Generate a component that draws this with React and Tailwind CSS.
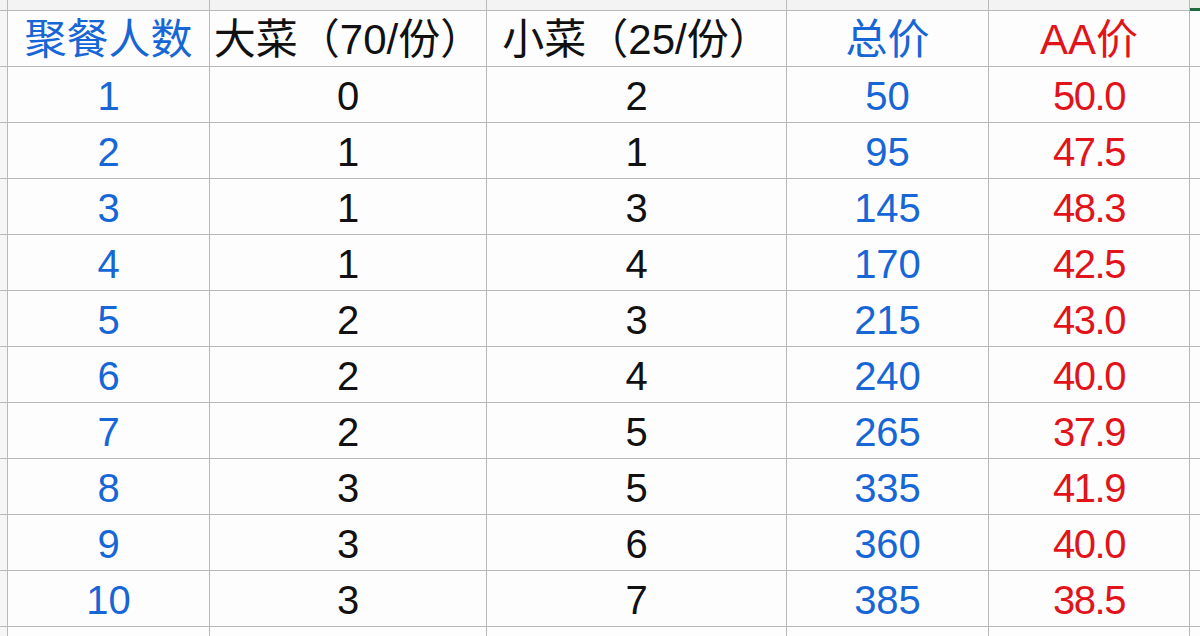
import React from "react";

const rows = [
  [1, 0, 2, 50, "50.0"],
  [2, 1, 1, 95, "47.5"],
  [3, 1, 3, 145, "48.3"],
  [4, 1, 4, 170, "42.5"],
  [5, 2, 3, 215, "43.0"],
  [6, 2, 4, 240, "40.0"],
  [7, 2, 5, 265, "37.9"],
  [8, 3, 5, 335, "41.9"],
  [9, 3, 6, 360, "40.0"],
  [10, 3, 7, 385, "38.5"],
];

const cell = "flex items-center justify-center whitespace-nowrap border-r border-b border-[#b9b9b9]";
const blue = "text-[#1766d6]";
const red = "text-[#e2141b] tracking-[-1.5px]";
const black = "text-[#111111]";

function Row({ cells, h = "h-[56px]", edge = "bg-[#f6f6f6]", extra = "" }) {
  return (
    <>
      <div className={`${cell} ${h} ${edge}`}></div>
      {cells.map((c, i) => (
        <div key={i} className={`${cell} ${h} ${extra} ${c[1] || ""}`}>{c[0]}</div>
      ))}
      <div className={`${h} border-b border-[#b9b9b9]`}></div>
    </>
  );
}

export default function App() {
  return (
    <div
      className="w-[1200px] h-[636px] overflow-hidden bg-[#fdfdfd] text-[40px] leading-none"
      style={{ fontFamily: '"Liberation Sans", "Noto Sans CJK SC", sans-serif' }}
    >
      <div className="grid grid-cols-[8px_202px_277px_300px_202px_201px_10px]">
        <div className={`${cell} h-[11px] bg-[#f3f3f3]`}></div>
        <div className={`${cell} h-[11px] bg-[#f3f3f3]`}></div>
        <div className={`${cell} h-[11px] bg-[#f3f3f3]`}></div>
        <div className={`${cell} h-[11px] bg-[#f3f3f3]`}></div>
        <div className={`${cell} h-[11px] bg-[#f3f3f3]`}></div>
        <div className={`${cell} h-[11px] bg-[#f3f3f3]`}></div>
        <div className="h-[11px] border-b-[3px] border-[#1e6b3f] bg-[#e9efe9]"></div>

        <Row
          extra="text-[42px] pt-[2px]"
          cells={[
            ["聚餐人数", blue],
            ["大菜（70/份）", black],
            ["小菜（25/份）", black],
            ["总价", blue],
            ["AA价", "text-[#e2141b]"],
          ]}
        />
        {rows.map((r) => (
          <Row
            key={r[0]}
            extra="pt-[2px]"
            cells={[
              [r[0], blue],
              [r[1], black],
              [r[2], black],
              [r[3], blue],
              [r[4], red],
            ]}
          />
        ))}
        <Row cells={[["", ""], ["", ""], ["", ""], ["", ""], ["", ""]]} h="h-[20px]" />
      </div>
    </div>
  );
}
